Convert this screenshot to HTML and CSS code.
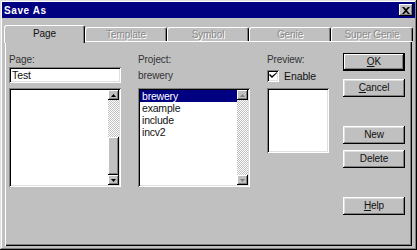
FILE: index.html
```html
<!DOCTYPE html>
<html lang="en">
  <head>
    <meta charset="UTF-8" />
    <title>Save As</title>
    <link rel="stylesheet" href="styles.css">
  </head>
  <body>
    <div class="window">
      <div class="titlebar">
        <span class="title">Save As</span>
        <span class="close">
          <svg width="8" height="7" viewBox="0 0 8 7"><path d="M0 0h2l2 2 2-2h2L5 3.5 8 7H6L4 5 2 7H0l3-3.5z" fill="#000"/></svg>
        </span>
      </div>

      <div class="tabs">
        <div class="tab active">Page</div>
        <div class="tab disabled">Template</div>
        <div class="tab disabled">Symbol</div>
        <div class="tab disabled">Genie</div>
        <div class="tab disabled">Super Genie</div>
      </div>

      <div class="panel">
        <div class="col col-page">
          <div class="label">Page:</div>
          <div class="field">Test</div>
          <div class="listbox">
            <div class="items"></div>
            <div class="scrollbar">
              <div class="sb-btn"><svg width="5" height="3" viewBox="0 0 5 3"><path d="M2.5 0L5 3H0z" fill="#000"/></svg></div>
              <div class="sb-track"></div>
              <div class="sb-thumb"></div>
              <div class="sb-btn"><svg width="5" height="3" viewBox="0 0 5 3"><path d="M0 0h5L2.5 3z" fill="#000"/></svg></div>
            </div>
          </div>
        </div>

        <div class="col col-project">
          <div class="label">Project:</div>
          <div class="value">brewery</div>
          <div class="listbox">
            <div class="items">
              <div class="item selected">brewery</div>
              <div class="item">example</div>
              <div class="item">include</div>
              <div class="item">incv2</div>
            </div>
            <div class="scrollbar">
              <div class="sb-btn"><svg width="5" height="3" viewBox="0 0 5 3"><path d="M2.5 0L5 3H0z" fill="#808080"/></svg></div>
              <div class="sb-track"></div>
              <div class="sb-btn"><svg width="5" height="3" viewBox="0 0 5 3"><path d="M0 0h5L2.5 3z" fill="#808080"/></svg></div>
            </div>
          </div>
        </div>

        <div class="col col-preview">
          <div class="label">Preview:</div>
          <div class="check-row">
            <span class="checkbox">
              <svg width="8" height="7" viewBox="0 0 8 7"><path d="M0 3l3 3 5-5V0L3 4 1 2z" fill="#000"/></svg>
            </span>
            Enable
          </div>
          <div class="preview"></div>
        </div>

        <div class="col col-buttons">
          <div class="btn default"><u>O</u>K</div>
          <div class="btn btn-cancel"><u>C</u>ancel</div>
          <div class="btn btn-new">New</div>
          <div class="btn btn-delete">Delete</div>
          <div class="btn btn-help"><u>H</u>elp</div>
        </div>
      </div>
    </div>
  </body>
</html>
```

FILE: styles.css
```css
body {
  margin: 0;
  background-color: #c0c0c0;
  font-family: "Liberation Sans", Arial, sans-serif;
  font-size: 10px;
  letter-spacing: -0.1px;
  color: #111;
}
.window {
  width: 417px;
  height: 250px;
  box-sizing: border-box;
  padding: 2px 2px 3px;
  display: flex;
  flex-direction: column;
  background-color: #c0c0c0;
  box-shadow: inset -1px -1px #000, inset 1px 1px #dfdfdf,
    inset -2px -2px #808080, inset 2px 2px #fff;
}
.titlebar {
  height: 16px;
  padding: 0 2px 0 2px;
  display: flex;
  align-items: center;
  justify-content: space-between;
  background-color: #000080;
  color: #fff;
}
.title {
  font-weight: bold;
  letter-spacing: 0.6px;
}
.close {
  width: 14px;
  height: 12px;
  display: flex;
  align-items: center;
  justify-content: center;
  background-color: #c0c0c0;
  box-shadow: inset -1px -1px #000, inset 1px 1px #fff, inset -2px -2px #808080;
}

/* tabs */
.tabs {
  height: 16px;
  margin: 7px 0 0 2px;
  display: flex;
  align-items: flex-end;
}
.tab {
  width: 82px;
  height: 14px;
  box-sizing: border-box;
  border-top: 1px solid #fff;
  border-left: 1px solid #fff;
  border-right: 1px solid #000;
  border-radius: 3px 3px 0 0;
  box-shadow: inset -1px 0 #808080;
  text-align: center;
  line-height: 13px;
}
.tab.active {
  width: 81px;
  height: 18px;
  margin-bottom: -2px;
  line-height: 15px;
  position: relative;
  z-index: 1;
  background-color: #c0c0c0;
}
.tab.disabled {
  color: #8a8a8a;
  text-shadow: 1px 1px #fff;
}

/* panel */
.panel {
  flex: 1;
  margin: 0 3px 1px 3px;
  padding: 12px 5px 0 4px;
  display: flex;
  box-shadow: inset 1px 1px #fff, inset -1px -1px #000, inset -2px -2px #808080;
}
.col {
  display: flex;
  flex-direction: column;
}
.col-page,
.col-project {
  width: 112px;
  margin-right: 17px;
}
.col-preview {
  width: 62px;
  margin-right: 14px;
}
.col-buttons {
  width: 62px;
}
.label {
  line-height: 13px;
  color: #333;
}
.value {
  line-height: 13px;
  margin-top: 3px;
  color: #333;
}
.field {
  height: 16px;
  margin-top: 1px;
  padding: 2px 3px 0;
  box-sizing: border-box;
  line-height: 12px;
  font-size: 10.5px;
  background-color: #fff;
  box-shadow: inset 1px 1px #808080, inset -1px -1px #fff,
    inset 2px 2px #000, inset -2px -2px #dfdfdf;
}
.col-page .listbox {
  margin-top: 5px;
}
.col-project .listbox {
  margin-top: 6px;
}
.listbox {
  height: 99px;
  padding: 2px;
  box-sizing: border-box;
  display: flex;
  background-color: #fff;
  box-shadow: inset 1px 1px #808080, inset -1px -1px #fff,
    inset 2px 2px #000, inset -2px -2px #dfdfdf;
}
.items {
  flex: 1;
}
.item {
  height: 12px;
  line-height: 12px;
  padding-left: 2px;
  font-size: 10.5px;
  letter-spacing: -0.2px;
}
.item.selected {
  background-color: #000080;
  color: #fff;
}
.scrollbar {
  width: 11px;
  display: flex;
  flex-direction: column;
}
.sb-btn {
  height: 10px;
  display: flex;
  align-items: center;
  justify-content: center;
  background-color: #c0c0c0;
  box-shadow: inset -1px -1px #000, inset 1px 1px #fff, inset -2px -2px #808080;
}
.sb-track {
  flex: 1;
  background: repeating-conic-gradient(#fff 0 25%, #c0c0c0 0 50%) 0 0 / 2px 2px;
}
.sb-thumb {
  height: 38px;
  background-color: #c0c0c0;
  box-shadow: inset -1px -1px #000, inset 1px 1px #fff, inset -2px -2px #808080;
}

/* preview column */
.check-row {
  height: 13px;
  margin-top: 3px;
  display: flex;
  align-items: center;
  gap: 5px;
  font-size: 10.5px;
}
.checkbox {
  width: 12px;
  height: 12px;
  box-sizing: border-box;
  display: flex;
  align-items: center;
  justify-content: center;
  background-color: #fff;
  box-shadow: inset 1px 1px #808080, inset -1px -1px #fff,
    inset 2px 2px #000, inset -2px -2px #dfdfdf;
}
.preview {
  height: 65px;
  margin-top: 6px;
  background-color: #fff;
  box-shadow: inset 1px 1px #808080, inset -1px -1px #fff,
    inset 2px 2px #000, inset -2px -2px #dfdfdf;
}

/* buttons */
.btn {
  height: 18px;
  box-sizing: border-box;
  text-align: center;
  line-height: 18px;
  background-color: #c0c0c0;
  box-shadow: inset -1px -1px #000, inset 1px 1px #fff,
    inset -2px -2px #808080, inset 2px 2px #dfdfdf;
}
.btn.default {
  box-shadow: inset 0 0 0 1px #000, inset -2px -2px #000, inset 2px 2px #fff,
    inset -3px -3px #808080;
}
.btn-cancel {
  margin-top: 8px;
}
.btn-new {
  margin-top: 29px;
}
.btn-delete {
  margin-top: 6px;
}
.btn-help {
  margin-top: 29px;
}
```
